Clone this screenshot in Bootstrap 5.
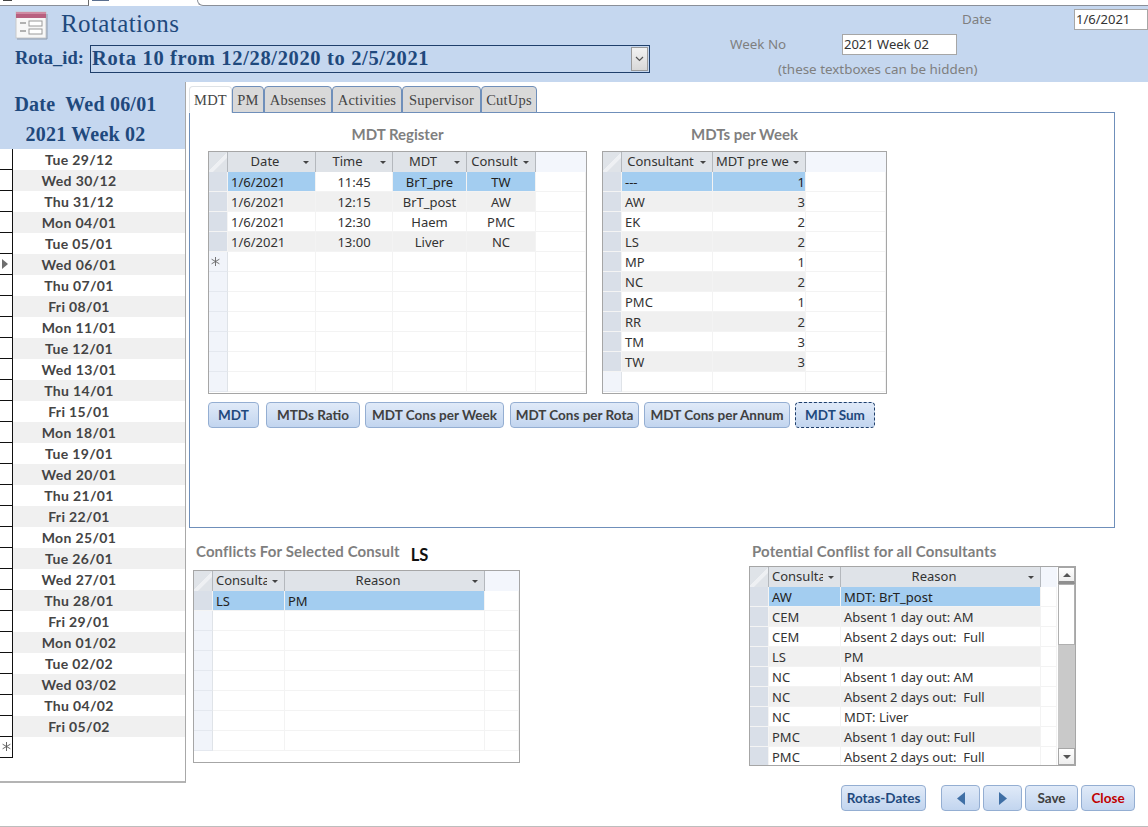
<!DOCTYPE html>
<html lang="en">
<head>
<meta charset="utf-8">
<title>Rotatations</title>
<link rel="stylesheet" href="https://cdn.jsdelivr.net/npm/bootstrap@5.3.0/dist/css/bootstrap.min.css">
<style>
:root{--band:#c5d7ef;--ink:#1f497d;--mute:#7f7f7f;--sel:#a3cdf0;--alt:#f0f0f0;--rowsel:#d9dfe8;--line:#f3f3f3;}
html,body{margin:0;background:#fff;}
.sheet{width:1148px;height:827px;overflow:hidden;border-bottom:1px solid #bdbdbd;font-family:"Noto Sans",sans-serif;color:#333;}
.strip{height:6px;}
.strip-a{width:89px;height:6px;border-right:1px solid #6a6a6a;border-bottom:1px solid #8a8f98;position:relative;}
.strip-a::before{content:"";position:absolute;left:3px;top:0;width:9px;height:1px;background:#444;}
.strip-b{width:108px;height:6px;background:#fff;position:relative;}
.strip-b::before{content:"";position:absolute;left:3px;top:0;width:17px;height:1px;background:#5a6f8f;}
.strip-c{width:10px;height:6px;border-left:1px solid #8a8f98;border-bottom:1px solid #8a8f98;border-bottom-left-radius:7px;}
.strip-d{flex:1;height:6px;border-bottom:1px solid #8a8f98;}
.band{height:76px;background:var(--band);}
.band-left{width:650px;}
.band-title{height:37px;padding:2px 0 0 15px;gap:13px;}
.band-title span{font:400 25px/28px "Liberation Serif",serif;color:var(--ink);letter-spacing:.4px;margin-top:-3px;}
.combo-row{padding-left:15px;height:28px;margin-top:2px;}
.combo-label{font:700 18.5px/26px "Liberation Serif",serif;color:var(--ink);width:75px;}
.combo{height:28px;width:560px;border:1px solid #1f3f6b;}
.combo-text{font:700 20.5px/24px "Liberation Serif",serif;letter-spacing:.65px;color:var(--ink);padding-left:1px;}
.combo-btn{width:17px;height:24px;margin:1px;background:linear-gradient(#f2f2f2,#d8d8d8);border:1px solid #9a9a9a;}
.band-right{position:relative;flex:1;}
.lbl{font-size:13.4px;color:var(--mute);line-height:20px;}
.tbox{height:21px;background:#fff;border:1px solid #a6a6a6;font-size:13px;line-height:19px;padding-left:1px;color:#333;white-space:nowrap;overflow:hidden;}
.r-date{padding:3px 0 0 312px;}
.r-date .lbl{width:112px;}
.r-date .tbox{width:74px;}
.r-week{padding:4px 0 0 80px;}
.r-week .lbl{width:112px;}
.r-week .tbox{width:115px;}
.r-hint{padding:4px 0 0 128px;}
.body-row{height:744px;}
.side{width:186px;height:701px;border-right:1px solid #a8a8a8;border-bottom:2px solid #b4b4b4;flex:none;}
.side-head{height:67px;background:var(--band);color:var(--ink);font:700 20px/30px "Liberation Serif",serif;letter-spacing:.2px;padding:7px 14px 0 0;text-align:center;}
.side-head div{white-space:pre;}
.day{height:21px;}
.day-sel{width:13px;height:21px;border-right:1px solid #111;border-bottom:1px solid #111;position:relative;flex:none;}
.day-txt{flex:1;text-align:center;padding-right:40px;font:700 14px/21px "Lato",sans-serif;color:#444;letter-spacing:.35px;}
.day:nth-child(even) .day-txt{background:var(--alt);}
.day-cur::after{content:"";position:absolute;left:2px;top:5px;border-left:6px solid #6f6f6f;border-top:5px solid transparent;border-bottom:5px solid transparent;}
.star{display:block;margin:5px 0 0 2px;}
.main{padding:4px 0 0 3px;width:962px;}
.tabs-x{height:26px;border:0;margin:0;flex-wrap:nowrap;}
.tabs-x .nav-link{height:27px;padding:0;text-align:center;font:400 14.5px/27px "Liberation Serif",serif;letter-spacing:.2px;color:#444;background:#d9d9d9;border:1px solid #6f8fba;border-bottom:1px solid #6f8fba;border-radius:4px 4px 0 0;margin:0;}
.tabs-x .nav-link.active{background:#fff;border-bottom-color:#fff;color:#444;position:relative;z-index:2;}
.t1{width:43px}.t2{width:32px}.t3{width:68px}.t4{width:70px}.t5{width:79px}.t6{width:56px}
.panel{width:926px;height:416px;border:1px solid #6f8fba;padding:0 18px;background:#fff;}
.grid-head{height:38px;padding-top:11px;text-align:center;font:700 15px/20px "Lato",sans-serif;color:#7f7f7f;}
.sec-title{font:700 15px/18px "Lato",sans-serif;letter-spacing:.12px;color:#7f7f7f;}
.dgrid{border:1px solid #a6a6a6;background:#fff;overflow:hidden;}
.dtable{table-layout:fixed;border-collapse:separate;border-spacing:0;margin:0;width:auto;}
.dtable th,.dtable td{height:20px;padding:1px 3px 0;font-size:13px;line-height:18px;font-weight:400;color:#333;border:0;border-right:1px solid var(--line);border-bottom:1px solid var(--line);box-shadow:none;background:#fff;white-space:nowrap;overflow:hidden;}
.dtable th{padding-top:0;background:#dfe3e8;border-right:1px solid #b4b8bd;border-bottom:0;text-align:center;position:relative;line-height:18px;vertical-align:top;}
.dtable th.head-fill{background:#f3f6fc;border:0;}
.dtable th.head-corner{background:linear-gradient(135deg,#dfe3e8 48%,#eef0f3 50%,#eef0f3 62%,#dfe3e8 64%);}
.dtable th.sortable{padding-right:16px;}
.dtable th.sortable::after{content:"";position:absolute;right:6px;top:9px;border-top:3px solid #444;border-left:3px solid transparent;border-right:3px solid transparent;}
.dtable td.s{background:#f1f4fa;border-right:1px solid #dfe3e8;border-bottom:1px solid #e4e8ef;padding:0;}
.dtable td.sd{background:var(--rowsel);border-right:1px solid #f4f4f4;border-bottom:1px solid #f4f4f4;padding:0;}
.dtable td.c{text-align:center;}
.dtable td.r{text-align:right;padding-right:0;}
.dtable tr.alt td:not(.s):not(.sd):not(.f){background:var(--alt);}
.dtable tr.pick td:not(.s):not(.sd):not(.f):not(.nopick){background:var(--sel);color:#222;}
.dtable td.f{background:#fff;}
.clipx{display:block;width:51px;overflow:hidden;text-align:left;}
.g1{width:379px;height:243px;}
.g2{width:285px;height:243px;}
.g2-wrap{margin-left:15px;}
.g3{width:327px;height:193px;}
.g4{width:327px;height:200px;}
.cs{width:19px}
.g1 .c1{width:88px}.g1 .c2{width:77px}.g1 .c3{width:74px}.g1 .c4{width:69px}.g1 .cf{width:50px}
.g2 .c1{width:91px}.g2 .c2{width:93px}.g2 .cf{width:80px}
.g3 .c1{width:72px}.g3 .c2{width:200px}.g3 .cf{width:34px}
.g4 .c1{width:72px}.g4 .c2{width:200px}.g4 .cf{width:16px}
.scrollb{width:18px;background:#c9c9c9;border-left:1px solid #fff;}
.scr-btn{height:17px;background:linear-gradient(#fff,#eee);border:1px solid #a6a6a6;display:flex;align-items:center;justify-content:center;}
.scr-up{border-bottom:3px solid #8f8f8f;}
.scr-thumb{height:61px;background:#fff;border:1px solid #b0b0b0;}
.scr-fill{flex:1;}
.arr-u{border-bottom:4px solid #555;border-left:4px solid transparent;border-right:4px solid transparent;}
.arr-d{border-top:4px solid #555;border-left:4px solid transparent;border-right:4px solid transparent;}
.abtn.btn{height:26px;padding:0;font:700 13.5px/24px "Lato",sans-serif;color:#404040;background:linear-gradient(#e0eaf8,#c2d5ef);border:1px solid #94aed2;border-radius:4px;}
.abtn.blue{color:var(--ink);}
.abtn.red{color:#c00000;}
.abtn.focus{border:1px dashed #1f3f6b;}
.b1{width:51px}.b2{width:94px;margin-left:7px}.b3{width:139px;margin-left:5px}.b4{width:129px;margin-left:6px}.b5{width:146px;margin-left:5px}.b6{width:80px;margin-left:5px}
.btn-row{margin-top:8px;}
.low{padding-left:4px;}
.low-l{width:327px;margin-top:14px;}
.low-r{width:327px;margin-left:229px;margin-top:14px;}
.low-l .sec-title{height:28px;padding:0 0 0 3px;}
.low-r .sec-title{height:24px;padding-left:3px;}
.pick-name{font:700 16.5px/26px "Lato",sans-serif;letter-spacing:0;color:#111;margin-left:11px;}
.foot{padding-top:19px;width:946px;justify-content:flex-end;}
.f1{width:85px}.f2{width:39px;margin-left:15px}.f3{width:39px;margin-left:3px}.f4{width:53px;margin-left:3px}.f5{width:54px;margin-left:3px}
.abtn svg{display:block;margin:auto;}
</style>
</head>
<body>
<div class="sheet">
  <div class="strip d-flex"><div class="strip-a"></div><div class="strip-b"></div><div class="strip-c"></div><div class="strip-d"></div></div>

  <div class="band d-flex">
    <div class="band-left">
      <div class="band-title d-flex align-items-center">
        <svg width="33" height="29" viewBox="0 0 33 29" aria-hidden="true">
          <rect x="1" y="1" width="30" height="26" fill="#f7f7f7" stroke="#c9c9c9"/>
          <rect x="1" y="1" width="30" height="6" fill="#b8607f"/>
          <rect x="1" y="1" width="30" height="2" fill="#cf8aa2"/>
          <path d="M5 12h6M5 20h6" stroke="#9a9a9a" stroke-width="1.5"/>
          <rect x="14" y="10" width="13" height="5" fill="#fff" stroke="#9a9a9a"/>
          <rect x="14" y="18" width="13" height="5" fill="#fff" stroke="#9a9a9a"/>
          <path d="M2 28h30V3" fill="none" stroke="#8f9bab" stroke-width="1"/>
        </svg>
        <span>Rotatations</span>
      </div>
      <div class="combo-row d-flex">
        <div class="combo-label">Rota_id:</div>
        <div class="combo d-flex justify-content-between">
          <div class="combo-text">Rota 10 from 12/28/2020 to 2/5/2021</div>
          <div class="combo-btn d-flex align-items-center justify-content-center">
            <svg width="9" height="6" viewBox="0 0 9 6" aria-hidden="true"><path d="M1 1l3.500 3.500L8 1" fill="none" stroke="#555" stroke-width="1.200"/></svg>
          </div>
        </div>
      </div>
    </div>
    <div class="band-right">
      <div class="r-date d-flex"><div class="lbl">Date</div><div class="tbox">1/6/2021</div></div>
      <div class="r-week d-flex"><div class="lbl">Week No</div><div class="tbox">2021 Week 02</div></div>
      <div class="r-hint lbl">(these textboxes can be hidden)</div>
    </div>
  </div>

  <div class="body-row d-flex">
    <div class="side">
      <div class="side-head"><div>Date  Wed 06/01</div><div>2021 Week 02</div></div>
      <div class="side-list">
        <div class="day d-flex"><div class="day-sel"></div><div class="day-txt">Tue 29/12</div></div>
        <div class="day d-flex"><div class="day-sel"></div><div class="day-txt">Wed 30/12</div></div>
        <div class="day d-flex"><div class="day-sel"></div><div class="day-txt">Thu 31/12</div></div>
        <div class="day d-flex"><div class="day-sel"></div><div class="day-txt">Mon 04/01</div></div>
        <div class="day d-flex"><div class="day-sel"></div><div class="day-txt">Tue 05/01</div></div>
        <div class="day d-flex"><div class="day-sel day-cur"></div><div class="day-txt">Wed 06/01</div></div>
        <div class="day d-flex"><div class="day-sel"></div><div class="day-txt">Thu 07/01</div></div>
        <div class="day d-flex"><div class="day-sel"></div><div class="day-txt">Fri 08/01</div></div>
        <div class="day d-flex"><div class="day-sel"></div><div class="day-txt">Mon 11/01</div></div>
        <div class="day d-flex"><div class="day-sel"></div><div class="day-txt">Tue 12/01</div></div>
        <div class="day d-flex"><div class="day-sel"></div><div class="day-txt">Wed 13/01</div></div>
        <div class="day d-flex"><div class="day-sel"></div><div class="day-txt">Thu 14/01</div></div>
        <div class="day d-flex"><div class="day-sel"></div><div class="day-txt">Fri 15/01</div></div>
        <div class="day d-flex"><div class="day-sel"></div><div class="day-txt">Mon 18/01</div></div>
        <div class="day d-flex"><div class="day-sel"></div><div class="day-txt">Tue 19/01</div></div>
        <div class="day d-flex"><div class="day-sel"></div><div class="day-txt">Wed 20/01</div></div>
        <div class="day d-flex"><div class="day-sel"></div><div class="day-txt">Thu 21/01</div></div>
        <div class="day d-flex"><div class="day-sel"></div><div class="day-txt">Fri 22/01</div></div>
        <div class="day d-flex"><div class="day-sel"></div><div class="day-txt">Mon 25/01</div></div>
        <div class="day d-flex"><div class="day-sel"></div><div class="day-txt">Tue 26/01</div></div>
        <div class="day d-flex"><div class="day-sel"></div><div class="day-txt">Wed 27/01</div></div>
        <div class="day d-flex"><div class="day-sel"></div><div class="day-txt">Thu 28/01</div></div>
        <div class="day d-flex"><div class="day-sel"></div><div class="day-txt">Fri 29/01</div></div>
        <div class="day d-flex"><div class="day-sel"></div><div class="day-txt">Mon 01/02</div></div>
        <div class="day d-flex"><div class="day-sel"></div><div class="day-txt">Tue 02/02</div></div>
        <div class="day d-flex"><div class="day-sel"></div><div class="day-txt">Wed 03/02</div></div>
        <div class="day d-flex"><div class="day-sel"></div><div class="day-txt">Thu 04/02</div></div>
        <div class="day d-flex"><div class="day-sel"></div><div class="day-txt">Fri 05/02</div></div>
        <div class="day d-flex"><div class="day-sel"><svg class="star" width="9" height="9" viewBox="0 0 9 9" aria-hidden="true"><path d="M4.500 0v9M.6 2.200l7.800 4.600M.6 6.800l7.800-4.600" stroke="#555" stroke-width=".9"/></svg></div><div class="day-txt"></div></div>
      </div>
    </div>

    <div class="main">
      <ul class="nav nav-tabs tabs-x">
        <li class="nav-item"><a class="nav-link active t1" href="#">MDT</a></li>
        <li class="nav-item"><a class="nav-link t2" href="#">PM</a></li>
        <li class="nav-item"><a class="nav-link t3" href="#">Absenses</a></li>
        <li class="nav-item"><a class="nav-link t4" href="#">Activities</a></li>
        <li class="nav-item"><a class="nav-link t5" href="#">Supervisor</a></li>
        <li class="nav-item"><a class="nav-link t6" href="#">CutUps</a></li>
      </ul>
      <div class="panel">
        <div class="d-flex">
          <div>
            <div class="grid-head">MDT Register</div>
            <div class="dgrid g1">
              <table class="table dtable">
                <colgroup><col class="cs"><col class="c1"><col class="c2"><col class="c3"><col class="c4"><col class="cf"></colgroup>
                <thead><tr><th class="head-corner"></th><th class="sortable">Date</th><th class="sortable">Time</th><th class="sortable">MDT</th><th class="sortable">Consult</th><th class="head-fill"></th></tr></thead>
                <tbody>
                  <tr class="pick"><td class="sd"></td><td>1/6/2021</td><td class="c nopick">11:45</td><td class="c">BrT_pre</td><td class="c">TW</td><td class="f"></td></tr>
                  <tr class="alt"><td class="sd"></td><td>1/6/2021</td><td class="c">12:15</td><td class="c">BrT_post</td><td class="c">AW</td><td class="f"></td></tr>
                  <tr><td class="sd"></td><td>1/6/2021</td><td class="c">12:30</td><td class="c">Haem</td><td class="c">PMC</td><td class="f"></td></tr>
                  <tr class="alt"><td class="sd"></td><td>1/6/2021</td><td class="c">13:00</td><td class="c">Liver</td><td class="c">NC</td><td class="f"></td></tr>
                  <tr><td class="s"><svg class="star" width="9" height="9" viewBox="0 0 9 9" aria-hidden="true"><path d="M4.500 0v9M.6 2.200l7.800 4.600M.6 6.800l7.800-4.600" stroke="#666" stroke-width=".9"/></svg></td><td></td><td></td><td></td><td></td><td class="f"></td></tr>
                  <tr><td class="s"></td><td></td><td></td><td></td><td></td><td class="f"></td></tr>
                  <tr><td class="s"></td><td></td><td></td><td></td><td></td><td class="f"></td></tr>
                  <tr><td class="s"></td><td></td><td></td><td></td><td></td><td class="f"></td></tr>
                  <tr><td class="s"></td><td></td><td></td><td></td><td></td><td class="f"></td></tr>
                  <tr><td class="s"></td><td></td><td></td><td></td><td></td><td class="f"></td></tr>
                  <tr><td class="s"></td><td></td><td></td><td></td><td></td><td class="f"></td></tr>
                </tbody>
              </table>
            </div>
          </div>
          <div class="g2-wrap">
            <div class="grid-head">MDTs per Week</div>
            <div class="dgrid g2">
              <table class="table dtable">
                <colgroup><col class="cs"><col class="c1"><col class="c2"><col class="cf"></colgroup>
                <thead><tr><th class="head-corner"></th><th class="sortable">Consultant</th><th class="sortable">MDT pre we</th><th class="head-fill"></th></tr></thead>
                <tbody>
                  <tr class="pick"><td class="sd"></td><td>---</td><td class="r">1</td><td class="f"></td></tr>
                  <tr class="alt"><td class="sd"></td><td>AW</td><td class="r">3</td><td class="f"></td></tr>
                  <tr><td class="sd"></td><td>EK</td><td class="r">2</td><td class="f"></td></tr>
                  <tr class="alt"><td class="sd"></td><td>LS</td><td class="r">2</td><td class="f"></td></tr>
                  <tr><td class="sd"></td><td>MP</td><td class="r">1</td><td class="f"></td></tr>
                  <tr class="alt"><td class="sd"></td><td>NC</td><td class="r">2</td><td class="f"></td></tr>
                  <tr><td class="sd"></td><td>PMC</td><td class="r">1</td><td class="f"></td></tr>
                  <tr class="alt"><td class="sd"></td><td>RR</td><td class="r">2</td><td class="f"></td></tr>
                  <tr><td class="sd"></td><td>TM</td><td class="r">3</td><td class="f"></td></tr>
                  <tr class="alt"><td class="sd"></td><td>TW</td><td class="r">3</td><td class="f"></td></tr>
                  <tr><td class="s"></td><td></td><td></td><td class="f"></td></tr>
                </tbody>
              </table>
            </div>
          </div>
        </div>
        <div class="btn-row d-flex">
          <button class="btn abtn blue b1" type="button">MDT</button>
          <button class="btn abtn b2" type="button">MTDs Ratio</button>
          <button class="btn abtn b3" type="button">MDT Cons per Week</button>
          <button class="btn abtn b4" type="button">MDT Cons per Rota</button>
          <button class="btn abtn b5" type="button">MDT Cons per Annum</button>
          <button class="btn abtn blue focus b6" type="button">MDT Sum</button>
        </div>
      </div>

      <div class="low d-flex">
        <div class="low-l">
          <div class="sec-title d-flex"><span>Conflicts For Selected Consult</span><span class="pick-name">LS</span></div>
          <div class="dgrid g3">
            <table class="table dtable">
              <colgroup><col class="cs"><col class="c1"><col class="c2"><col class="cf"></colgroup>
              <thead><tr><th class="head-corner"></th><th class="sortable"><span class="clipx">Consulta</span></th><th class="sortable">Reason</th><th class="head-fill"></th></tr></thead>
              <tbody>
                <tr class="pick"><td class="sd"></td><td>LS</td><td>PM</td><td class="f"></td></tr>
                <tr><td class="s"></td><td></td><td></td><td class="f"></td></tr>
                <tr><td class="s"></td><td></td><td></td><td class="f"></td></tr>
                <tr><td class="s"></td><td></td><td></td><td class="f"></td></tr>
                <tr><td class="s"></td><td></td><td></td><td class="f"></td></tr>
                <tr><td class="s"></td><td></td><td></td><td class="f"></td></tr>
                <tr><td class="s"></td><td></td><td></td><td class="f"></td></tr>
                <tr><td class="s"></td><td></td><td></td><td class="f"></td></tr>
              </tbody>
            </table>
          </div>
        </div>
        <div class="low-r">
          <div class="sec-title">Potential Conflist for all Consultants</div>
          <div class="dgrid g4 d-flex justify-content-between">
            <table class="table dtable">
              <colgroup><col class="cs"><col class="c1"><col class="c2"><col class="cf"></colgroup>
              <thead><tr><th class="head-corner"></th><th class="sortable"><span class="clipx">Consulta</span></th><th class="sortable">Reason</th><th class="head-fill"></th></tr></thead>
              <tbody>
                <tr class="pick"><td class="sd"></td><td>AW</td><td>MDT: BrT_post</td><td class="f"></td></tr>
                <tr class="alt"><td class="sd"></td><td>CEM</td><td>Absent 1 day out: AM</td><td class="f"></td></tr>
                <tr><td class="sd"></td><td>CEM</td><td>Absent 2 days out:&nbsp; Full</td><td class="f"></td></tr>
                <tr class="alt"><td class="sd"></td><td>LS</td><td>PM</td><td class="f"></td></tr>
                <tr><td class="sd"></td><td>NC</td><td>Absent 1 day out: AM</td><td class="f"></td></tr>
                <tr class="alt"><td class="sd"></td><td>NC</td><td>Absent 2 days out:&nbsp; Full</td><td class="f"></td></tr>
                <tr><td class="sd"></td><td>NC</td><td>MDT: Liver</td><td class="f"></td></tr>
                <tr class="alt"><td class="sd"></td><td>PMC</td><td>Absent 1 day out: Full</td><td class="f"></td></tr>
                <tr><td class="sd"></td><td>PMC</td><td>Absent 2 days out:&nbsp; Full</td><td class="f"></td></tr>
              </tbody>
            </table>
            <div class="scrollb d-flex flex-column">
              <div class="scr-btn scr-up"><div class="arr-u"></div></div>
              <div class="scr-thumb"></div>
              <div class="scr-fill"></div>
              <div class="scr-btn"><div class="arr-d"></div></div>
            </div>
          </div>
        </div>
      </div>

      <div class="foot d-flex">
        <button class="btn abtn blue f1" type="button">Rotas-Dates</button>
        <button class="btn abtn f2" type="button" aria-label="Previous"><svg width="10" height="13" viewBox="0 0 10 13" aria-hidden="true"><path d="M9 0v13L1 6.500z" fill="#3f6fa5"/></svg></button>
        <button class="btn abtn f3" type="button" aria-label="Next"><svg width="10" height="13" viewBox="0 0 10 13" aria-hidden="true"><path d="M1 0v13l8-6.500z" fill="#3f6fa5"/></svg></button>
        <button class="btn abtn f4" type="button">Save</button>
        <button class="btn abtn red f5" type="button">Close</button>
      </div>
    </div>
  </div>
</div>
<script src="https://cdn.jsdelivr.net/npm/bootstrap@5.3.0/dist/js/bootstrap.bundle.min.js"></script>
</body>
</html>
